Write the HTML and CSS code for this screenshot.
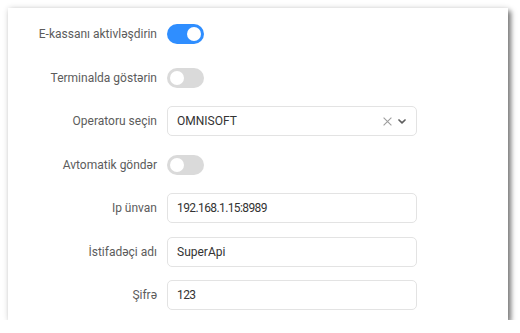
FILE: index.html
```html
<!DOCTYPE html>
<html>
<head>
<meta charset="utf-8">
<link rel="stylesheet" href="styles.css">
</head>
<body>
<div class="card">
  <div class="form">
    <div class="row">
      <label class="label">E-kassanı aktivləşdirin</label>
      <div class="control"><span class="switch on"><span class="knob"></span></span></div>
    </div>
    <div class="row">
      <label class="label">Terminalda göstərin</label>
      <div class="control"><span class="switch"><span class="knob"></span></span></div>
    </div>
    <div class="row">
      <label class="label">Operatoru seçin</label>
      <div class="control">
        <div class="field select">
          <span class="value">OMNISOFT</span>
          <span class="icons">
            <svg class="clear" width="9" height="9" viewBox="0 0 9 9"><path d="M0.6 0.6L8.4 8.4M8.4 0.6L0.6 8.4" stroke="#9e9e9e" stroke-width="1.1" fill="none"/></svg>
            <svg class="chev" width="8" height="5" viewBox="0 0 8 5"><path d="M1 1L4 3.8L7 1" stroke="#5f5f5f" stroke-width="1.7" fill="none" stroke-linecap="round" stroke-linejoin="round"/></svg>
          </span>
        </div>
      </div>
    </div>
    <div class="row">
      <label class="label">Avtomatik göndər</label>
      <div class="control"><span class="switch"><span class="knob"></span></span></div>
    </div>
    <div class="row">
      <label class="label">Ip ünvan</label>
      <div class="control"><div class="field"><span class="value num">192.168.1.15:8989</span></div></div>
    </div>
    <div class="row">
      <label class="label">İstifadəçi adı</label>
      <div class="control"><div class="field"><span class="value">SuperApi</span></div></div>
    </div>
    <div class="row">
      <label class="label">Şifrə</label>
      <div class="control"><div class="field"><span class="value num">123</span></div></div>
    </div>
  </div>
</div>
</body>
</html>
```

FILE: styles.css
```css
html, body {
  margin: 0;
  padding: 0;
  background: #ffffff;
}
body {
  padding: 8px 0 0 8px;
  font-family: Roboto, "Open Sans", sans-serif;
}
.card {
  width: 500px;
  height: 312px;
  box-sizing: border-box;
  background: #fff;
  box-shadow: 0 0 6px rgba(0,0,0,0.12), 3px 3px 5px rgba(0,0,0,0.5);
  padding-top: 11px;
}
.form {
  display: flex;
  flex-direction: column;
  gap: 13.5px;
}
.row {
  display: flex;
  align-items: center;
  height: 30px;
}
.label {
  width: 159px;
  text-align: right;
  font-size: 12px;
  color: #5c5c5c;
  padding-right: 10px;
  box-sizing: border-box;
  white-space: nowrap;
}
.control {
  display: flex;
  align-items: center;
}
.switch {
  position: relative;
  display: inline-block;
  width: 37px;
  height: 20px;
  border-radius: 10px;
  background: #dadada;
}
.switch.on {
  background: #2f8eff;
}
.knob {
  position: absolute;
  top: 3px;
  left: 3px;
  width: 14px;
  height: 14px;
  border-radius: 50%;
  background: #fff;
}
.switch.on .knob {
  left: 20px;
}
.field {
  box-sizing: border-box;
  width: 250px;
  height: 30px;
  border: 1px solid #e3e3e3;
  border-radius: 5px;
  display: flex;
  align-items: center;
  padding: 0 10px 0 9px;
}
.value {
  font-size: 12px;
  color: #333;
  flex: 1;
}
.value.num {
  letter-spacing: -0.6px;
}
.icons {
  display: flex;
  align-items: center;
  gap: 6px;
  padding-top: 1px;
}
```
